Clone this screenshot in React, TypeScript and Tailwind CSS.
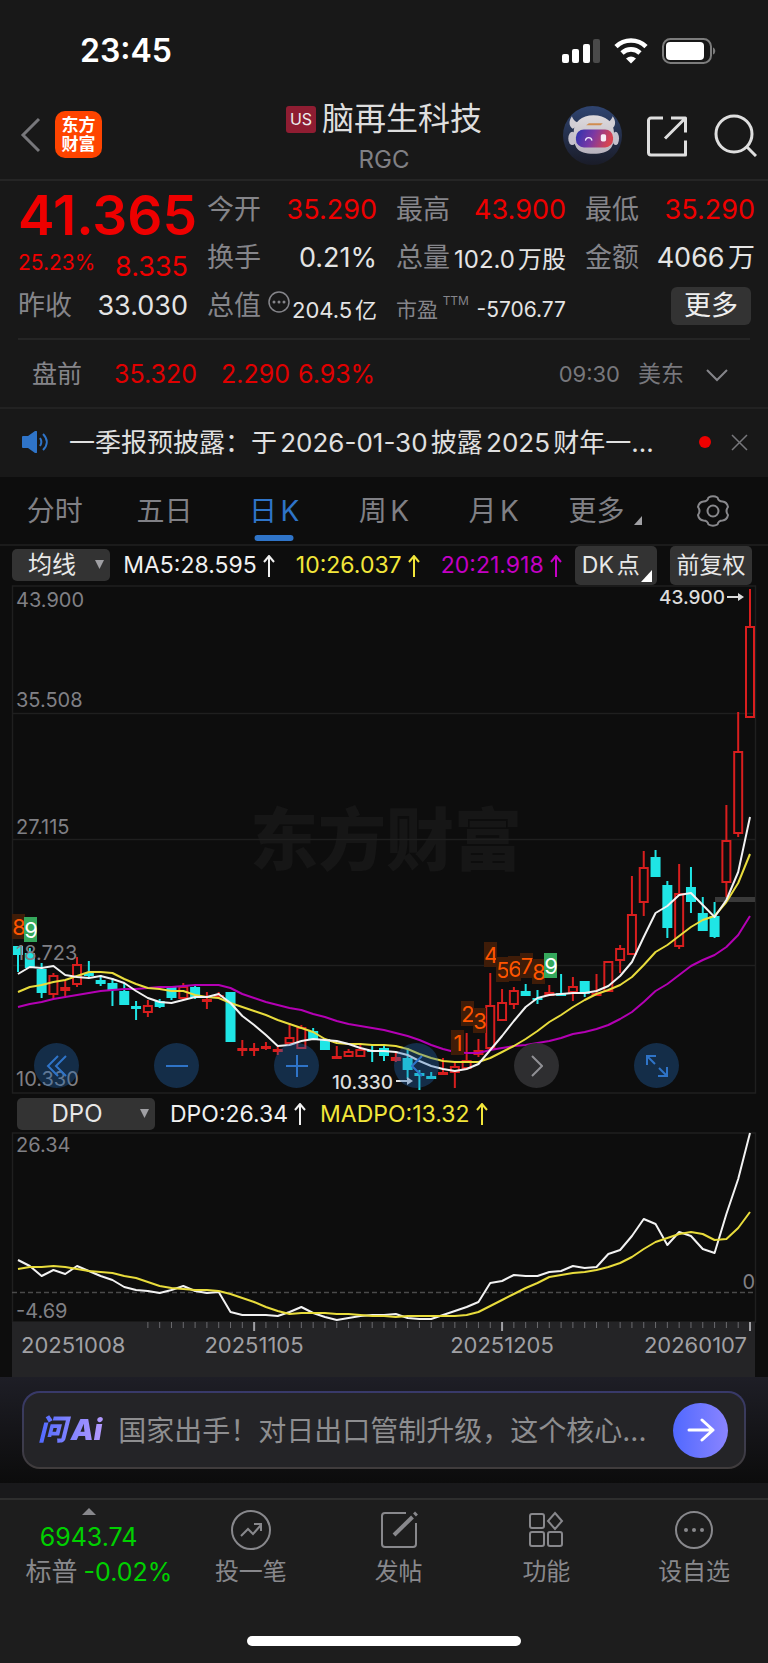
import React, { useState } from 'react';

const STEP = 732 / 62;
const FIRST_X = 18;
const UP = '#d81e1e';
const DOWN = '#1fe5e5';

// [rising, high, bodyTop, bodyBottom, low]
const candles: [number, number, number, number, number][] = [
  [0, 361, 361, 370, 387], [0, 363, 368, 383, 383], [0, 378, 384, 408, 413], [1, 388, 390, 410, 414],
  [1, 396, 402, 406, 411], [1, 372, 379, 400, 402], [0, 376, 388, 391, 393], [0, 390, 395, 399, 401],
  [0, 393, 398, 405, 421], [0, 398, 406, 420, 420], [0, 416, 421, 424, 435], [1, 415, 420, 428, 432],
  [0, 414, 416, 422, 423], [0, 402, 402, 413, 415], [1, 398, 401, 414, 415], [0, 401, 402, 412, 414],
  [1, 407, 414, 417, 424], [1, 407, 410, 412, 413], [0, 407, 407, 457, 457], [1, 455, 463, 466, 471],
  [1, 458, 463, 466, 471], [1, 457, 461, 464, 465], [1, 462, 464, 467, 470], [1, 438, 452, 459, 459],
  [1, 440, 442, 464, 464], [0, 443, 446, 455, 455], [0, 454, 454, 465, 465], [1, 461, 471, 474, 474],
  [1, 464, 466, 472, 472], [1, 458, 464, 472, 472], [0, 460, 465, 467, 477], [0, 461, 463, 471, 476],
  [1, 468, 472, 476, 477], [0, 463, 473, 485, 494], [0, 485, 488, 491, 505], [0, 487, 491, 494, 494],
  [1, 473, 487, 490, 490], [1, 477, 481, 488, 503], [1, 448, 475, 484, 484], [1, 454, 465, 470, 472],
  [1, 388, 420, 464, 464], [1, 404, 417, 436, 436], [1, 402, 405, 420, 424], [0, 399, 406, 411, 411],
  [0, 405, 413, 415, 419], [1, 400, 407, 411, 411], [0, 389, 408, 411, 411], [1, 392, 401, 408, 416],
  [0, 396, 396, 409, 412], [1, 389, 408, 411, 411], [1, 376, 376, 407, 407], [1, 360, 363, 376, 388],
  [1, 291, 329, 370, 370], [1, 266, 282, 318, 331], [0, 265, 272, 292, 292], [0, 296, 300, 343, 353],
  [1, 279, 308, 362, 364], [0, 282, 302, 317, 328], [0, 312, 328, 346, 346], [0, 317, 331, 352, 353],
  [1, 220, 255, 298, 315], [1, 127, 166, 249, 252], [1, 4, 41, 133, 133],
];

const ma5 = [389, 382, 383, 381, 390, 392, 393, 391, 394, 398, 406, 413, 417, 418, 415, 412, 412, 409, 418, 431, 440, 450, 461, 460, 456, 454, 455, 456, 459, 463, 466, 466, 467, 470, 476, 481, 484, 486, 484, 479, 465, 451, 436, 422, 413, 410, 409, 408, 408, 406, 401, 391, 377, 352, 328, 321, 310, 308, 320, 332, 315, 287, 232];
const ma10 = [407, 402, 400, 397, 395, 391, 387, 387, 388, 394, 399, 403, 404, 406, 406, 410, 412, 413, 418, 422, 426, 430, 435, 439, 443, 447, 454, 458, 459, 459, 460, 460, 461, 464, 469, 473, 476, 477, 477, 477, 473, 467, 461, 454, 446, 437, 430, 422, 415, 409, 405, 400, 392, 380, 367, 360, 351, 342, 335, 331, 317, 298, 269];
const ma20 = [422, 419, 417, 414, 412, 410, 408, 406, 405, 404, 404, 403, 402, 402, 401, 400, 400, 400, 403, 409, 413, 417, 420, 423, 425, 429, 432, 436, 439, 441, 443, 445, 448, 451, 455, 460, 464, 467, 468, 468, 465, 463, 461, 460, 458, 456, 453, 449, 447, 444, 440, 434, 427, 417, 406, 399, 390, 381, 375, 370, 362, 350, 331];
const dpo = [128, 134, 144, 138, 142, 134, 139, 144, 148, 155, 158, 159, 161, 158, 154, 159, 161, 160, 180, 183, 183, 183, 184, 180, 175, 181, 185, 188, 186, 184, 183, 183, 182, 186, 187, 187, 183, 179, 175, 170, 151, 149, 143, 144, 144, 140, 139, 134, 136, 135, 122, 118, 104, 87, 92, 113, 100, 104, 117, 121, 82, 47, 1];
const madpo = [137, 135, 135, 134, 135, 137, 139, 140, 141, 144, 146, 150, 154, 156, 157, 158, 158, 159, 162, 166, 170, 175, 179, 182, 181, 181, 181, 182, 182, 183, 184, 184, 185, 184, 184, 184, 184, 184, 183, 180, 174, 168, 162, 156, 151, 145, 143, 141, 140, 138, 135, 131, 125, 117, 110, 106, 102, 100, 102, 108, 107, 96, 80];

const markers = [
  { n: 8, x: 12, y: 329 },
  { n: 9, x: 24, y: 332, done: true },
  { n: 1, x: 451, y: 445 },
  { n: 2, x: 461, y: 416 },
  { n: 3, x: 473, y: 423 },
  { n: 4, x: 484, y: 357 },
  { n: 5, x: 496, y: 372 },
  { n: 6, x: 508, y: 371 },
  { n: 7, x: 520, y: 368 },
  { n: 8, x: 532, y: 374 },
  { n: 9, x: 544, y: 368, done: true },
];

const toPoints = (values: number[]) => values.map((y, i) => `${FIRST_X + i * STEP},${y}`).join(' ');

const UpArrow = () => (
  <svg width="12" height="22" viewBox="0 0 12 22" fill="none" stroke="currentColor" strokeWidth="2" aria-hidden="true">
    <path d="M6 22V2M1 7l5-6 5 6" />
  </svg>
);

const StatusBar = () => (
  <div className="flex h-[90px] items-center justify-between pt-3 pr-[52px] pl-20">
    <span className="text-[32px] leading-10 font-semibold text-white">23:45</span>
    <svg width="156" height="28" viewBox="0 0 156 28" aria-hidden="true">
      <rect x="2" y="17" width="7" height="9" rx="2" fill="#fff" />
      <rect x="12" y="12" width="7" height="14" rx="2" fill="#fff" />
      <rect x="23" y="7" width="7" height="19" rx="2" fill="#fff" />
      <rect x="33" y="2" width="7" height="24" rx="2" fill="#4a4a4a" />
      <g fill="none" stroke="#fff" strokeWidth="4.6">
        <path d="M56 9.6a21.5 21.5 0 0 1 30 0" />
        <path d="M62 16a13 13 0 0 1 18 0" />
      </g>
      <path d="M66 21.5a8 8 0 0 1 10 0L71 26.500z" fill="#fff" />
      <rect x="103" y="2" width="48" height="24" rx="7.500" fill="none" stroke="#7c7c7c" strokeWidth="2" />
      <rect x="106" y="5" width="38" height="18" rx="4" fill="#fff" />
      <path d="M153 10.500c3 1 3 6 0 7z" fill="#7c7c7c" />
    </svg>
  </div>
);

const Robot = () => (
  <svg width="59" height="59" viewBox="68 260 178 178" aria-hidden="true">
    <defs>
      <linearGradient id="robotBg" x1="0" y1="0" x2="0" y2="1">
        <stop offset="0" stopColor="#2f4470" />
        <stop offset="1" stopColor="#1a1c28" />
      </linearGradient>
      <linearGradient id="robotVisor" x1="0" y1="0" x2="1" y2="0.2">
        <stop offset="0" stopColor="#2b34b0" />
        <stop offset="0.5" stopColor="#7a38a4" />
        <stop offset="1" stopColor="#d84450" />
      </linearGradient>
      <linearGradient id="robotHead" x1="0" y1="0" x2="0" y2="1">
        <stop offset="0" stopColor="#dedadd" />
        <stop offset="1" stopColor="#b8b3be" />
      </linearGradient>
    </defs>
    <circle cx="157" cy="349" r="89" fill="url(#robotBg)" />
    <path d="M95 291c-10 14-10 28 2 38l26-15c-14-4-24-10-28-23zM218 291c10 14 10 28-2 38l-26-15c14-4 24-10 28-23z" fill="#d2ced4" />
    <ellipse cx="96" cy="358" rx="12" ry="20" fill="#c6c2cd" />
    <ellipse cx="227" cy="358" rx="10" ry="20" fill="#c6c2cd" />
    <path d="M100 342c0-34 24-54 60-54s62 20 62 54c2 42-12 62-62 62s-60-20-60-62z" fill="url(#robotHead)" />
    <rect x="107" y="331" width="112" height="54" rx="24" fill="url(#robotVisor)" />
    <path d="M136 363c2-10 17-10 19 0" fill="none" stroke="#f2ecff" strokeWidth="4" strokeLinecap="round" />
    <rect x="182" y="345" width="16" height="22" rx="5" fill="#f6eef6" />
    <path d="M138 318l8-6h42l-6 6z" fill="#d08c50" />
  </svg>
);

const Header = () => (
  <header className="grid h-[91px] grid-cols-[1fr_auto_1fr] items-center border-b-2 border-[#252525] px-[11px]">
    <div className="flex items-center gap-[14px] pl-[9px]">
      <button aria-label="返回">
        <svg width="21" height="36" viewBox="0 0 21 36" fill="none" stroke="#77777b" strokeWidth="3">
          <path d="M19 2L3 18l16 16" />
        </svg>
      </button>
      <a href="#home" className="flex h-[47px] w-[47px] flex-col items-center justify-center rounded-[10px] bg-[#ff4400] text-[17px] leading-[19px] font-bold text-white">
        <span>东方</span>
        <span>财富</span>
      </a>
    </div>
    <div className="self-end text-center">
      <h1 className="flex items-center gap-[6px] text-[32px] leading-10 text-[#dedede]">
        <span className="rounded-[3px] bg-[#8f1d32] px-1 text-[16px] leading-[27px] text-[#eee]">US</span>
        脑再生科技
      </h1>
      <p className="pt-[2px] text-[24px] leading-[38px] text-[#808085]">RGC</p>
    </div>
    <div className="flex items-center justify-end pt-[2px]">
      <button aria-label="智能助手"><Robot /></button>
      <button aria-label="分享" className="ml-6">
        <svg width="42" height="42" viewBox="0 0 42 42" fill="none" stroke="#dedede" strokeWidth="3" strokeLinejoin="round">
          <path d="M17 3H5a2.500 2.500 0 0 0-2.500 2.500v32A2.500 2.500 0 0 0 5 40h34.500V25.500M25 3h14.500v14.500M39.500 3L19 23.500" />
        </svg>
      </button>
      <button aria-label="搜索" className="ml-[26px]">
        <svg width="43" height="43" viewBox="0 0 43 43" fill="none" stroke="#dedede" strokeWidth="3">
          <circle cx="20" cy="20" r="18" />
          <path d="M32 32l10 10" />
        </svg>
      </button>
    </div>
  </header>
);

const label = 'text-[27px] text-[#85858a]';
const red = 'text-[27px] text-[#ee0000]';
const white = 'text-[27px] text-[#e4e4e4]';
const row = 'flex h-12 items-center justify-between';

const Quote = () => (
  <section className="px-[18px] whitespace-nowrap">
    <div className="-mr-[5px] grid grid-cols-4 gap-[19px] pt-[5px] pb-2">
      <div>
        <div className="text-[55px] leading-[58px] font-semibold text-[#ee0000]">41.365</div>
        <div className="flex h-[38px] items-end justify-between text-[#ee0000]">
          <span className="text-[21px] leading-[38px]">25.23%</span>
          <span className="text-[27px] leading-[30px]">8.335</span>
        </div>
        <div className={row}>
          <span className={label}>昨收</span>
          <span className={white}>33.030</span>
        </div>
      </div>
      <div>
        <div className={row}>
          <span className={label}>今开</span>
          <span className={red}>35.290</span>
        </div>
        <div className={row}>
          <span className={label}>换手</span>
          <span className={white}>0.21%</span>
        </div>
        <div className={row}>
          <span className={label}>总值</span>
          <svg width="22" height="22" viewBox="0 0 22 22" className="mb-2 ml-1" fill="#85858a" aria-hidden="true">
            <circle cx="11" cy="11" r="10" fill="none" stroke="#85858a" strokeWidth="1.500" />
            <circle cx="6" cy="11" r="1.500" />
            <circle cx="11" cy="11" r="1.500" />
            <circle cx="16" cy="11" r="1.500" />
          </svg>
          <span className="pt-2 text-[22px] text-[#e4e4e4]">204.5亿</span>
        </div>
      </div>
      <div>
        <div className={row}>
          <span className={label}>最高</span>
          <span className={red}>43.900</span>
        </div>
        <div className={row}>
          <span className={label}>总量</span>
          <span className="pt-1 text-[24px] text-[#e4e4e4]">102.0万股</span>
        </div>
        <div className={row}>
          <span className="pt-2 text-[21px] text-[#85858a]">
            市盈<sup className="-top-3 ml-[2px] text-[12px]">TTM</sup>
          </span>
          <span className="pt-2 text-[21px] text-[#e4e4e4]">-5706.77</span>
        </div>
      </div>
      <div>
        <div className={row}>
          <span className={label}>最低</span>
          <span className={red}>35.290</span>
        </div>
        <div className={row}>
          <span className={label}>金额</span>
          <span className={white}>4066万</span>
        </div>
        <div className="flex h-12 items-center justify-end pr-1">
          <button className="h-[38px] w-20 rounded-md bg-[#333333] text-[27px] leading-[38px] text-[#eeeeee]">更多</button>
        </div>
      </div>
    </div>
    <div className="flex h-[69px] items-center border-t-2 border-[#252525] pt-[2px] pr-[22px] pl-[14px]">
      <span className="text-[25px] text-[#85858a]">盘前</span>
      <span className="ml-8 text-[25px] text-[#e00000]">35.320</span>
      <span className="ml-6 text-[25px] text-[#e00000]">2.290</span>
      <span className="ml-2 text-[25px] text-[#e00000]">6.93%</span>
      <span className="ml-auto text-[22px] text-[#77777c]">09:30</span>
      <span className="ml-[18px] text-[23px] text-[#77777c]">美东</span>
      <button aria-label="展开" className="ml-[22px]">
        <svg width="22" height="14" viewBox="0 0 22 14" fill="none" stroke="#85858a" strokeWidth="2">
          <path d="M1 2l10 10L21 2" />
        </svg>
      </button>
    </div>
  </section>
);

const Notice = () => (
  <section className="flex h-[70px] items-center border-t-2 border-[#222222] pr-5 pb-[2px] pl-[22px]">
    <svg width="27" height="22" viewBox="0 0 27 22" fill="none" stroke="#2f74c8" strokeWidth="2" aria-hidden="true">
      <path d="M0 6q0-1 1-1h5l7-5q2-1 2 1v20q0 2-2 1l-7-5H1q-1 0-1-1z" fill="#2f74c8" stroke="none" />
      <path d="M18 7c2 3 2 5 0 8M21 3c5 5 5 11 0 16" />
    </svg>
    <a href="#notice" className="ml-5 min-w-0 truncate text-[26px] text-[#e0e0e0]">一季报预披露：于2026-01-30披露2025财年一...</a>
    <span className="ml-auto h-3 w-3 shrink-0 rounded-full bg-[#ee0000]" />
    <button aria-label="关闭" className="ml-5">
      <svg width="17" height="17" viewBox="0 0 17 17" stroke="#77777b" strokeWidth="1.500">
        <path d="M1 1l15 15M16 1L1 16" />
      </svg>
    </button>
  </section>
);

const tabs = ['分时', '五日', '日K', '周K', '月K'];

const PeriodTabs = () => {
  const [active, setActive] = useState('日K');

  return (
    <nav className="grid h-[69px] grid-cols-7 items-stretch border-b-2 border-[#1b1b1b] text-[28px] text-[#808085]">
      {tabs.map((tab) => (
        <button
          key={tab}
          onClick={() => setActive(tab)}
          className={`relative ${active === tab ? 'text-[#2f74c8]' : ''}`}
        >
          {tab}
          {active === tab && (
            <span className="absolute bottom-[3px] left-1/2 h-[6px] w-[39px] -translate-x-1/2 rounded-full bg-[#2f74c8]" />
          )}
        </button>
      ))}
      <button className="flex items-center justify-center gap-[10px] pl-1">
        更多
        <svg width="8" height="9" viewBox="0 0 8 9" className="mt-5" fill="#a0a0a4" aria-hidden="true">
          <path d="M8 0v9H0z" />
        </svg>
      </button>
      <button aria-label="设置" className="flex items-center justify-center">
        <svg width="34" height="34" viewBox="0 0 34 34" fill="none" stroke="#88888c" strokeWidth="2" strokeLinejoin="round">
          <path d="M12.500 3.500Q17 1 21.500 3.500Q22.500 7.500 26.500 7.500Q31 8 32 13Q29 17 32 21Q31 26 26.500 26.500Q22.500 26.500 21.500 30.500Q17 33 12.500 30.500Q11.500 26.500 7.500 26.500Q3 26 2 21Q5 17 2 13Q3 8 7.500 7.500Q11.500 7.500 12.500 3.500z" />
          <circle cx="17" cy="17" r="5.500" />
        </svg>
      </button>
    </nav>
  );
};

const Dropdown = ({ name, value, className }: { name: string; value: string; className: string }) => (
  <div className={`relative shrink-0 ${className}`}>
    <select aria-label={name} className="h-8 w-full appearance-none rounded-[5px] bg-[#333333] pr-5 pl-[2px] text-center text-[24px] leading-8 text-[#e8e8e8]">
      <option>{value}</option>
    </select>
    <svg width="9" height="9" viewBox="0 0 9 9" className="pointer-events-none absolute top-3 right-[6px]" fill="#a0a0a4" aria-hidden="true">
      <path d="M0 0h9L4.500 9z" />
    </svg>
  </div>
);

const Averages = () => (
  <div className="flex h-[39px] items-center justify-between pr-4 pl-3 text-[23px] whitespace-nowrap">
    <Dropdown name="主图指标" value="均线" className="w-[98px]" />
    <span className="flex items-center gap-[6px] text-[#f0f0f0]">MA5:28.595<UpArrow /></span>
    <span className="flex items-center gap-[6px] pl-2 text-[#f2e63a]">10:26.037<UpArrow /></span>
    <span className="flex items-center gap-[6px] pl-2 text-[#c400c4]">20:21.918<UpArrow /></span>
    <button className="relative h-[39px] w-[82px] rounded-[5px] bg-[#333333] pr-[10px] text-[#e8e8e8]">
      DK点
      <svg width="11" height="12" viewBox="0 0 11 12" className="absolute right-[5px] bottom-[3px]" fill="#fff" aria-hidden="true">
        <path d="M11 0v12H0z" />
      </svg>
    </button>
    <button className="h-[39px] w-[82px] rounded-[5px] bg-[#333333] text-[#e8e8e8]">前复权</button>
  </div>
);

const round = 'flex h-[45px] w-[45px] items-center justify-center rounded-full';

const PriceChart = () => (
  <div className="relative">
    <svg viewBox="0 0 768 509" className="block w-full" fontSize="22">
      <text x="386" y="280" textAnchor="middle" fontSize="68" fontWeight="900" fill="#161616">东方财富</text>
      <g stroke="#1f1f1f" strokeWidth="1.500" fill="none">
        <rect x="12.500" y="1" width="743" height="507" />
        <path d="M12 128.500h743M12 254.500h743M12 380.500h743" />
      </g>
      {candles.map(([rising, high, top, bottom, low], i) => {
        const x = FIRST_X + i * STEP;
        const hollow = rising === 1 && bottom - top > 4;
        const color = rising ? UP : DOWN;
        return (
          <g key={i} stroke={color} strokeWidth="2" fill={hollow ? 'none' : color}>
            <path d={`M${x} ${high}V${top}M${x} ${bottom}V${low}`} />
            {hollow ? (
              <rect x={x - 4} y={top + 1} width="8" height={bottom - top - 2} />
            ) : (
              <rect x={x - 5} y={top} width="10" height={bottom - top} stroke="none" />
            )}
          </g>
        );
      })}
      <rect x="715" y="312" width="40" height="5" fill="#3a3a3a" />
      <g fill="none" strokeWidth="2" strokeLinejoin="round">
        <polyline points={toPoints(ma20)} stroke="#b400b4" />
        <polyline points={toPoints(ma10)} stroke="#e8dc3c" />
        <polyline points={toPoints(ma5)} stroke="#f2f2f2" />
      </g>
      {markers.map(({ n, x, y, done }) => (
        <g key={x}>
          <rect x={x} y={y} width="13" height="25" fill={done ? '#35a85c' : '#3f1c08'} />
          <text x={x + 7} y={y + 21} textAnchor="middle" fill={done ? '#fff' : '#ff5500'}>{n}</text>
        </g>
      ))}
      <g fill="#808085" fontSize="20">
        <text x="16" y="22">43.900</text>
        <text x="16" y="122">35.508</text>
        <text x="16" y="249">27.115</text>
        <text x="16" y="375">18.723</text>
        <text x="16" y="501">10.330</text>
      </g>
      <g fill="#dcdcdc" fontWeight="500" fontSize="19">
        <text x="725" y="19" textAnchor="end">43.900</text>
        <path d="M727 11h11v-3l6 4-6 4v-3h-11z" />
        <text x="393" y="504" textAnchor="end">10.330</text>
        <path d="M396 495h11v-3l6 4-6 4v-3h-11z" />
      </g>
    </svg>
    <div className="absolute inset-x-0 bottom-[6px] flex justify-between pr-[89px] pl-[34px]">
      <button aria-label="最早" className={`${round} bg-[#2169b8]/35`}>
        <svg width="22" height="24" viewBox="0 0 22 24" fill="none" stroke="#2f74c8" strokeWidth="2"><path d="M12 2L2 12l10 10M20 2L10 12l10 10" /></svg>
      </button>
      <button aria-label="缩小" className={`${round} bg-[#2169b8]/35`}>
        <svg width="22" height="22" viewBox="0 0 22 22" stroke="#2f74c8" strokeWidth="2"><path d="M0 11h22" /></svg>
      </button>
      <button aria-label="放大" className={`${round} bg-[#2169b8]/35`}>
        <svg width="22" height="22" viewBox="0 0 22 22" stroke="#2f74c8" strokeWidth="2"><path d="M0 11h22M11 0v22" /></svg>
      </button>
      <button aria-label="左移" className={`${round} bg-[#2169b8]/35`}>
        <svg width="12" height="22" viewBox="0 0 12 22" fill="none" stroke="#2f74c8" strokeWidth="2"><path d="M11 1L1 11l10 10" /></svg>
      </button>
      <button aria-label="右移" className={`${round} bg-[#2e2e30]`}>
        <svg width="12" height="22" viewBox="0 0 12 22" fill="none" stroke="#909094" strokeWidth="2"><path d="M1 1l10 10L1 21" /></svg>
      </button>
      <button aria-label="全屏" className={`${round} bg-[#2169b8]/35`}>
        <svg width="24" height="24" viewBox="0 0 24 24" fill="none" stroke="#2f74c8" strokeWidth="2"><path d="M2 11V2h9M2 2l8 8M22 13v9h-9M22 22l-8-8" /></svg>
      </button>
    </div>
  </div>
);

const DpoChart = () => (
  <>
    <div className="flex h-[38px] items-center pt-[2px] pl-[17px] text-[23px]">
      <Dropdown name="副图指标" value="DPO" className="w-[138px]" />
      <span className="ml-[15px] flex items-center gap-[6px] text-[#f0f0f0]">DPO:26.34<UpArrow /></span>
      <span className="ml-[14px] flex items-center gap-[6px] text-[#f2e63a]">MADPO:13.32<UpArrow /></span>
    </div>
    <svg viewBox="0 0 768 245" className="block w-full" fontSize="20">
      <rect x="12.500" y="1" width="743" height="189" fill="none" stroke="#1f1f1f" strokeWidth="1.500" />
      <path d="M12 160.500h743" stroke="#4a4a4a" strokeWidth="1.500" strokeDasharray="5 3" />
      <g fill="none" strokeWidth="2" strokeLinejoin="round">
        <polyline points={toPoints(dpo)} stroke="#f2f2f2" />
        <polyline points={toPoints(madpo)} stroke="#e8dc3c" />
      </g>
      <g fill="#808085">
        <text x="16" y="20">26.34</text>
        <text x="16" y="186">-4.69</text>
        <text x="755" y="157" textAnchor="end">0</text>
      </g>
      <rect x="12" y="190" width="743" height="55" fill="#242426" />
      {dpo.map((_, i) => {
        const x = FIRST_X + i * STEP;
        const major = i === 20 || i === 41 || i === 62;
        return i < 11 ? null : (
          <path key={i} d={`M${x} 190v${major ? 9 : 6}`} stroke={major ? '#a0a0a4' : '#6a6a6e'} strokeWidth={major ? 2 : 1} />
        );
      })}
      <g fill="#a0a0a4" fontSize="22">
        <text x="21" y="221">20251008</text>
        <text x="254" y="221" textAnchor="middle">20251105</text>
        <text x="502" y="221" textAnchor="middle">20251205</text>
        <text x="747" y="221" textAnchor="end">20260107</text>
      </g>
    </svg>
  </>
);

const AskBar = () => (
  <section className="bg-linear-to-b from-[#1e1e26] to-[#0c0c0c] px-[22px] py-[14px]">
    <div className="rounded-[18px] bg-linear-to-b from-[#38396a] to-[#403c3c] p-[2px]">
      <form className="flex h-[74px] items-center rounded-2xl bg-[#242427] pr-4 pl-[14px]">
        <span className="bg-linear-to-r from-[#4f68ff] to-[#b99cff] bg-clip-text pr-1 text-[29px] leading-10 font-black text-transparent italic">问Ai</span>
        <input
          type="text"
          aria-label="问Ai"
          placeholder="国家出手！对日出口管制升级，这个核心..."
          className="ml-3 h-10 min-w-0 flex-1 bg-transparent pt-[2px] text-[28px] text-white outline-none placeholder:text-[#8e8e90]"
        />
        <button type="button" aria-label="发送" className="flex h-[55px] w-[55px] items-center justify-center rounded-full bg-linear-to-r from-[#5068ff] to-[#8a84ff]">
          <svg width="28" height="26" viewBox="0 0 28 26" fill="none" stroke="#fff" strokeWidth="3" strokeLinecap="round" strokeLinejoin="round">
            <path d="M2 13h24M15 3l11 10-11 10" />
          </svg>
        </button>
      </form>
    </div>
  </section>
);

const actions = [
  {
    text: '投一笔',
    icon: (
      <>
        <circle cx="20" cy="20" r="19" />
        <path d="M10 26l7-7 5 5 8-9M23 14h7v7" />
      </>
    ),
  },
  {
    text: '发帖',
    icon: (
      <>
        <path d="M27 3H6a3 3 0 0 0-3 3v28a3 3 0 0 0 3 3h28a3 3 0 0 0 3-3V13" />
        <path d="M33.500 7L15 25" strokeWidth="4" />
        <path d="M35.500 5l2-2" strokeWidth="4" />
      </>
    ),
  },
  {
    text: '功能',
    icon: (
      <>
        <rect x="4" y="4" width="14" height="14" rx="2" />
        <path d="M29 3l7 8-7 8-7-8z" />
        <rect x="4" y="22" width="14" height="14" rx="2" />
        <rect x="22" y="22" width="14" height="14" rx="2" />
      </>
    ),
  },
  {
    text: '设自选',
    icon: (
      <>
        <circle cx="20" cy="20" r="18" />
        <g fill="#88888c" stroke="none">
          <circle cx="12" cy="20" r="2" />
          <circle cx="20" cy="20" r="2" />
          <circle cx="28" cy="20" r="2" />
        </g>
      </>
    ),
  },
];

const BottomNav = () => (
  <footer className="border-t-2 border-[#2e2e2e] bg-[#1d1d1d]">
    <nav className="flex h-[136px] pt-2">
      <a href="#index" className="flex w-[177px] flex-col items-center whitespace-nowrap text-[#00d000]">
        <svg width="14" height="7" viewBox="0 0 14 7" fill="#88888c" aria-hidden="true">
          <path d="M7 0l7 7H0z" />
        </svg>
        <span className="pt-[5px] text-[25px] leading-[34px]">6943.74</span>
        <span className="flex items-center gap-[6px] pl-[21px] text-[25px] leading-9">
          <span className="text-[26px] text-[#88888c]">标普</span>-0.02%
        </span>
      </a>
      {actions.map(({ text, icon }) => (
        <a key={text} href={`#${text}`} className="flex flex-1 flex-col items-center text-[#88888c]">
          <svg width="40" height="40" viewBox="0 0 40 40" className="mt-[2px]" fill="none" stroke="#88888c" strokeWidth="2" aria-hidden="true">
            {icon}
          </svg>
          <span className="pt-1 text-[24px] leading-9">{text}</span>
        </a>
      ))}
    </nav>
    <div className="flex justify-center pb-[17px]">
      <div className="h-[10px] w-[274px] rounded-full bg-white" />
    </div>
  </footer>
);

const App = () => (
  <div className="min-h-screen bg-[#181818] font-['Inter','Noto_Sans_CJK_SC',sans-serif] [text-autospace:normal]">
    <StatusBar />
    <Header />
    <Quote />
    <Notice />
    <main className="bg-[#0d0d0d]">
      <PeriodTabs />
      <Averages />
      <PriceChart />
      <DpoChart />
      <AskBar />
    </main>
    <div className="h-[15px] bg-[#19191b]" />
    <BottomNav />
  </div>
);

export default App;
